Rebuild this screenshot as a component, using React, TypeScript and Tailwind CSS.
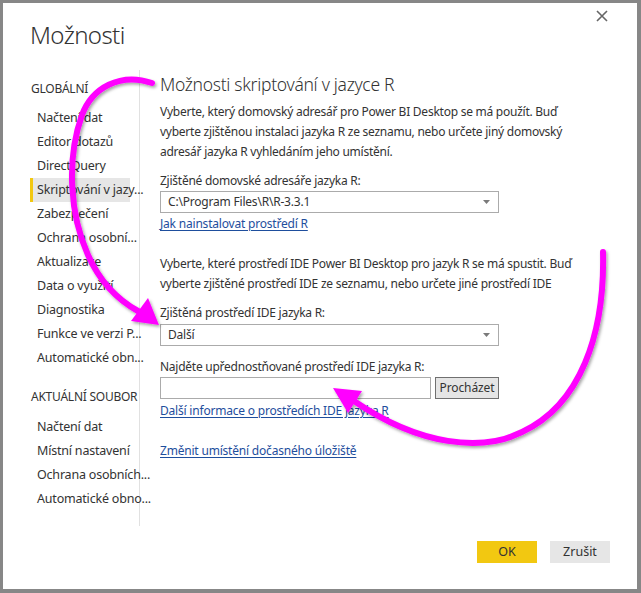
import React from 'react';

const font = { fontFamily: '"Noto Sans", "Open Sans", sans-serif' };

const globalItems = [
  'Načtení dat',
  'Editor dotazů',
  'DirectQuery',
  'Skriptování v jazy...',
  'Zabezpečení',
  'Ochrana osobní...',
  'Aktualizace',
  'Data o využití',
  'Diagnostika',
  'Funkce ve verzi P...',
  'Automatické obn...',
];

const fileItems = ['Načtení dat', 'Místní nastavení', 'Ochrana osobních...', 'Automatické obno...'];

const NavItem: React.FC<{ label: string; active?: boolean }> = ({ label, active }) => (
  <div
    className={`flex h-[24px] w-[100px] items-center whitespace-nowrap text-[12.5px] tracking-[-0.2px] text-[#333] ${
      active ? 'bg-[#e6e6e6] border-l-[3px] border-[#f2c811] pl-[4px]' : 'pl-[7px]'
    }`}
  >
    {label}
  </div>
);

const Select: React.FC<{ value: string }> = ({ value }) => (
  <div className="flex h-[22px] w-[339px] items-center justify-between border border-[#ababab] bg-white pl-[7px] pr-[8px] text-[12px] tracking-[-0.2px] text-[#333]">
    <span>{value}</span>
    <svg width="7" height="4" viewBox="0 0 7 4">
      <path d="M0 0 L7 0 L3.5 4 Z" fill="#7a7a7a" />
    </svg>
  </div>
);

const Link: React.FC<{ children: React.ReactNode }> = ({ children }) => (
  <div className="whitespace-nowrap text-[12px] tracking-[-0.2px] leading-[20px] text-[#1e4e9d] underline underline-offset-2">
    {children}
  </div>
);

const Text: React.FC<{ className?: string; children: React.ReactNode }> = ({ className = '', children }) => (
  <div className={`whitespace-nowrap text-[12px] tracking-[-0.25px] leading-[20px] text-[#333] ${className}`}>{children}</div>
);

export default function App() {
  return (
    <div style={font} className="relative flex h-[593px] w-[641px] flex-col border-t-[3px] border-l-[3px] border-r-[4px] border-b-[4px] border-[#878787] bg-white">
      {/* header */}
      <div className="relative h-[67px] pl-[27px] pt-[16px]">
        <div className="text-[24px] font-light leading-[32px] tracking-[-0.6px] text-[#333]">Možnosti</div>
        <svg className="absolute right-[29px] top-[7px]" width="12" height="12" viewBox="0 0 12 12">
          <path d="M1 1 L11 11 M11 1 L1 11" stroke="#666" strokeWidth="1.6" />
        </svg>
      </div>

      {/* body */}
      <div className="flex h-[456px]">
        <div className="w-[137px] border-r border-[#e1e1e1] pl-[27px] pt-[9px]">
          <Text className="pl-[1px] text-[12.5px]">GLOBÁLNÍ</Text>
          <div className="mt-[7px] flex flex-col">
            {globalItems.map((it, i) => (
              <NavItem key={it} label={it} active={i === 3} />
            ))}
          </div>
          <Text className="mt-[17px] pl-[1px] text-[12.5px] tracking-[-0.4px]">AKTUÁLNÍ SOUBOR</Text>
          <div className="mt-[8px] flex flex-col">
            {fileItems.map((it) => (
              <NavItem key={it} label={it} />
            ))}
          </div>
        </div>

        <div className="flex-1 pl-[20px]">
          <div className="whitespace-nowrap text-[17.5px] font-light leading-[28px] tracking-[-0.3px] text-[#333]">
            Možnosti skriptování v jazyce R
          </div>
          <div className="mt-[4px]">
            <Text>Vyberte, který domovský adresář pro Power BI Desktop se má použít. Buď</Text>
            <Text>vyberte zjištěnou instalaci jazyka R ze seznamu, nebo určete jiný domovský</Text>
            <Text>adresář jazyka R vyhledáním jeho umístění.</Text>
          </div>
          <Text className="mt-[9px]">Zjištěné domovské adresáře jazyka R:</Text>
          <Select value="C:\Program Files\R\R-3.3.1" />
          <div className="mt-px">
            <Link>Jak nainstalovat prostředí R</Link>
          </div>

          <div className="mt-[20px]">
            <Text>Vyberte, které prostředí IDE Power BI Desktop pro jazyk R se má spustit. Buď</Text>
            <Text>vyberte zjištěné prostředí IDE ze seznamu, nebo určete jiné prostředí IDE</Text>
          </div>
          <Text className="mt-[9px]">Zjištěná prostředí IDE jazyka R:</Text>
          <div className="mt-px">
            <Select value="Další" />
          </div>
          <Text className="mt-[11px]">Najděte upřednostňované prostředí IDE jazyka R:</Text>
          <div className="flex gap-[4px]">
            <div className="h-[22px] w-[271px] border border-[#ababab] bg-white" />
            <button className="h-[22px] w-[64px] border border-[#707070] bg-[#e5e5e5] text-[12px] tracking-[-0.1px] text-[#333]">
              Procházet
            </button>
          </div>
          <div className="mt-[2px]">
            <Link>Další informace o prostředích IDE jazyka R</Link>
          </div>
          <div className="mt-[20px]">
            <Link>Změnit umístění dočasného úložiště</Link>
          </div>
        </div>
      </div>

      {/* footer */}
      <div className="flex flex-1 items-start justify-end gap-[13px] pr-[27px] pt-[15px]">
        <button className="h-[22px] w-[60px] bg-[#f2c811] text-[12.5px] text-[#333]">OK</button>
        <button className="h-[22px] w-[60px] bg-[#e6e6e6] text-[12.5px] text-[#333]">Zrušit</button>
      </div>

      {/* annotation arrows */}
      <svg className="pointer-events-none absolute left-[-3px] top-[-3px]" width="641" height="593" viewBox="0 0 641 593">
        <defs>
          <filter id="sh" x="-20%" y="-20%" width="140%" height="140%">
            <feDropShadow dx="1.5" dy="2" stdDeviation="1.5" floodColor="#000" floodOpacity="0.35" />
          </filter>
        </defs>
        <g filter="url(#sh)">
          <path
            d="M152,83 C120,72 92,88 82,115 C66,160 70,215 88,255 C100,282 118,300 138,311"
            fill="none"
            stroke="#ff00ff"
            strokeWidth="6"
            strokeLinecap="round"
          />
          <path d="M159,325 L131,321 L148,298 Z" fill="#ff00ff" />
          <path
            d="M603,252 C605,335 580,405 522,432 C482,452 420,446 354,401"
            fill="none"
            stroke="#ff00ff"
            strokeWidth="6"
            strokeLinecap="round"
          />
          <path d="M333,388 L362,391 L348,413 Z" fill="#ff00ff" />
        </g>
      </svg>
    </div>
  );
}
